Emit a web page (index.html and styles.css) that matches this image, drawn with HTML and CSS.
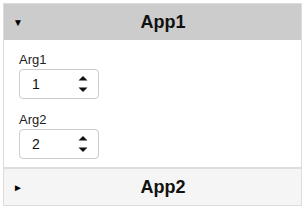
FILE: index.html
```html
<!DOCTYPE html>
<html lang="en">
<head>
    <meta charset="UTF-8">
    <meta name="viewport" content="width=device-width, initial-scale=1.0">
    <title>Apps</title>
    <link rel="stylesheet" href="styles.css">
</head>
<body>
    <div class="accordion">
        <div class="panel open">
            <div class="panel-header">
                <span class="caret">&#9660;</span>
                <span class="title">App1</span>
            </div>
            <div class="panel-body">
                <div class="field">
                    <label for="arg1">Arg1</label>
                    <div class="number">
                        <input type="text" id="arg1" value="1">
                        <span class="spin">
                            <svg width="10" height="20" viewBox="0 0 10 20"><path d="M5 2 L9.5 6.5 L0.5 6.5 Z" fill="#111"/><path d="M0.5 13.5 L9.5 13.5 L5 18 Z" fill="#111"/></svg>
                        </span>
                    </div>
                </div>
                <div class="field">
                    <label for="arg2">Arg2</label>
                    <div class="number">
                        <input type="text" id="arg2" value="2">
                        <span class="spin">
                            <svg width="10" height="20" viewBox="0 0 10 20"><path d="M5 2 L9.5 6.5 L0.5 6.5 Z" fill="#111"/><path d="M0.5 13.5 L9.5 13.5 L5 18 Z" fill="#111"/></svg>
                        </span>
                    </div>
                </div>
            </div>
        </div>
        <div class="panel">
            <div class="panel-header">
                <span class="caret">&#9658;</span>
                <span class="title">App2</span>
            </div>
        </div>
    </div>
</body>
</html>
```

FILE: styles.css
```css
body {
    margin: 3px;
    font-family: "Liberation Sans", Arial, sans-serif;
    background-color: #ffffff;
}

.accordion {
    width: 297px;
    border: 1px solid #dddddd;
}

.panel + .panel {
    border-top: 2px solid #dddddd;
}

.panel-header {
    height: 36px;
    display: flex;
    align-items: center;
    padding-left: 9px;
    background-color: #f5f5f5;
}

.open .panel-header {
    background-color: #cccccc; /* active header is darker */
}

.caret {
    width: 12px;
    font-size: 10px;
    color: #000;
}

.title {
    flex: 1;
    text-align: center;
    font-size: 18px;
    font-weight: bold;
    color: #111;
}

.panel-body {
    padding: 12px 15px 8px;
}

.field + .field {
    margin-top: 13px;
}

.field label {
    display: block;
    font-size: 13px;
    line-height: 15px;
    color: #222;
    margin-bottom: 2px;
}

.number {
    display: flex;
    align-items: center;
    width: 80px;
    height: 30px;
    border: 1px solid #cccccc;
    border-radius: 4px;
    padding: 0 6px 0 12px;
    box-sizing: border-box;
}

.number input {
    border: none;
    outline: none;
    width: 40px;
    font-family: inherit;
    font-size: 14px;
    color: #111;
    padding: 0;
    background: transparent;
    flex: 1;
}

.spin {
    display: flex;
    margin-right: 4px;
}
```
